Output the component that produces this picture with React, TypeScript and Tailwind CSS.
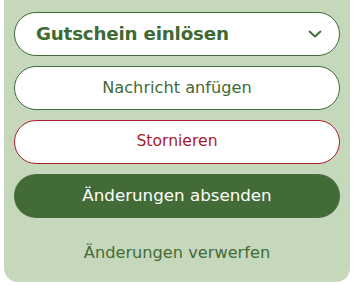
import React from "react";

export default function App() {
  return (
    <div className="w-[353px] h-[285px] bg-white" style={{ fontFamily: '"DejaVu Sans", sans-serif' }}>
      <div className="mx-[4px] w-[346px] h-[282px] bg-[#c6d8bc] rounded-b-[14px] px-[10px] pt-[12px] flex flex-col gap-[10px]">
        <button className="h-[44px] w-full bg-white border border-[#436b38] rounded-full flex items-center justify-between pl-[21px] pr-[17px]">
          <span className="text-[18.3px] font-bold text-[#3f6a34] tracking-[-0.2px]">Gutschein einlösen</span>
          <svg width="14" height="10" viewBox="0 0 14 10" fill="none">
            <path d="M1.5 2.5 L7 7.5 L12.5 2.5" stroke="#3f6a34" strokeWidth="1.8" strokeLinecap="round" strokeLinejoin="round" />
          </svg>
        </button>
        <button className="h-[44px] w-full bg-white border border-[#436b38] rounded-full flex items-center justify-center text-[16.2px] text-[#436b38]">
          Nachricht anfügen
        </button>
        <button className="h-[44px] w-full bg-white border border-[#a8202c] rounded-full flex items-center justify-center text-[15.6px] text-[#a8202c]">
          Stornieren
        </button>
        <button className="h-[44px] w-full bg-[#436b38] rounded-full flex items-center justify-center text-[16.7px] text-white">
          Änderungen absenden
        </button>
        <div className="h-[50px] flex items-center justify-center text-[16.2px] text-[#436b38]">
          Änderungen verwerfen
        </div>
      </div>
    </div>
  );
}
